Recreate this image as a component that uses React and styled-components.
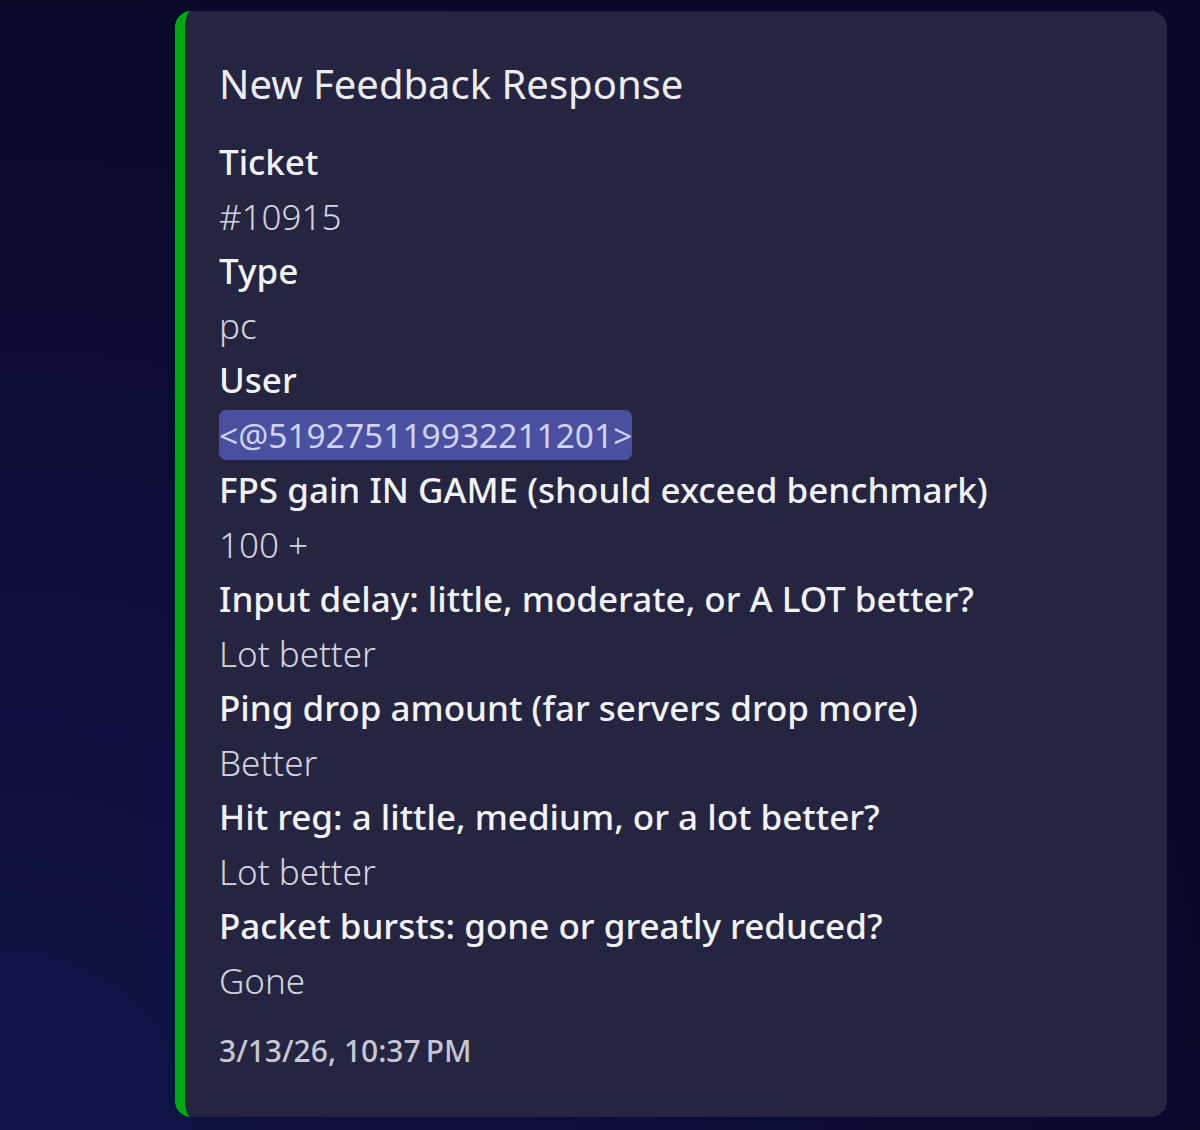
import React from "react";
import styled, { createGlobalStyle } from "styled-components";

const fields = [
  { name: "Ticket", value: "#10915" },
  { name: "Type", value: "pc" },
  { name: "User", value: "<@519275119932211201>", mention: true },
  { name: "FPS gain IN GAME (should exceed benchmark)", value: "100 +" },
  { name: "Input delay: little, moderate, or A LOT better?", value: "Lot better" },
  { name: "Ping drop amount (far servers drop more)", value: "Better" },
  { name: "Hit reg: a little, medium, or a lot better?", value: "Lot better" },
  { name: "Packet bursts: gone or greatly reduced?", value: "Gone" },
];

export default function App() {
  return (
    <>
      <GlobalStyle />
      <Page>
        <Embed>
          <Title>New Feedback Response</Title>
          <Fields>
            {fields.map((f) => (
              <Field key={f.name}>
                <FieldName>{f.name}</FieldName>
                <FieldValue>
                  {f.mention ? <Mention>{f.value}</Mention> : f.value}
                </FieldValue>
              </Field>
            ))}
          </Fields>
          <Footer>3/13/26, 10:37{"\u202F"}PM</Footer>
        </Embed>
      </Page>
    </>
  );
}

const GlobalStyle = createGlobalStyle`
  body {
    margin: 0;
    background: #0a0828;
    font-family: "Noto Sans", "Open Sans", sans-serif;
  }
`;

const Page = styled.div`
  min-height: 1130px;
  box-sizing: border-box;
  padding: 11px 33px 13px 175px;
  background: radial-gradient(ellipse at 0% 100%, #0f1448 0%, #0c0d38 40%, #0a0828 75%);
`;

const Embed = styled.div`
  box-sizing: border-box;
  width: 992px;
  min-height: 1106px;
  background: #252541;
  border-left: 10px solid #00a814;
  border-radius: 16px;
  padding: 48px 40px 47px 34px;
  display: flex;
  flex-direction: column;
`;

const Title = styled.div`
  color: #ececf1;
  font-size: 40px;
  line-height: 50px;
  font-weight: 400;
  margin-bottom: 27px;
`;

const Fields = styled.div`
  display: flex;
  flex-direction: column;
`;

const Field = styled.div`
  display: flex;
  flex-direction: column;
`;

const FieldName = styled.div`
  color: #f2f3f7;
  font-size: 35px;
  font-weight: 500;
  line-height: 52px;
`;

const FieldValue = styled.div`
  color: #d2d3dd;
  font-size: 35px;
  font-weight: 300;
  line-height: 57px;
`;

const Mention = styled.span`
  background: #4a4f9f;
  color: #cfd3fb;
  font-size: 33.5px;
  font-weight: 400;
  border-radius: 7px;
  padding: 2px 0;
`;

const Footer = styled.div`
  margin-top: 24px;
  color: #c6c7d2;
  font-size: 30px;
  font-weight: 500;
  line-height: 36px;
`;
